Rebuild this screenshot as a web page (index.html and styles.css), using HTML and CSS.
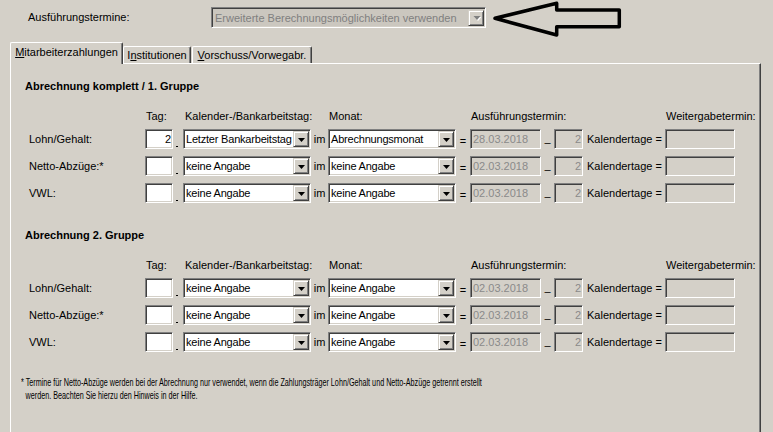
FILE: index.html
```html
<!DOCTYPE html>
<html lang="de">
<head>
<meta charset="utf-8">
<title>Ausführungstermine</title>
<link rel="stylesheet" href="styles.css">
</head>
<body>
<div class="dialog">
  <div class="topbar">
    <span class="top-label">Ausführungstermine:</span>
    <div class="combo combo-off combo-mode">
      <span class="combo-text">Erweiterte Berechnungsmöglichkeiten verwenden</span>
      <span class="combo-btn"><svg width="7" height="5" viewBox="0 0 7 5"><path class="arr-shadow" d="M1 1h7L4.5 5z"/><path class="arr" d="M0 0h7L3.5 4z"/></svg></span>
    </div>
    <svg class="pointer" width="135" height="40" viewBox="0 0 135 40">
      <polygon points="5,18.3 66.7,3.3 66.7,10 129.3,10 129.3,26.7 66.7,26.7 66.7,35" fill="none" stroke="#000" stroke-width="3.5" stroke-linejoin="round"/>
    </svg>
  </div>

  <div class="tabs">
    <span class="tab tab-active tab-w1"><u>M</u>itarbeiterzahlungen</span>
    <span class="tab tab-w2">I<u>n</u>stitutionen</span>
    <span class="tab tab-w3"><u>V</u>orschuss/Vorwegabr.</span>
  </div>

  <div class="panel">
    <section class="group">
      <h2 class="group-title">Abrechnung komplett / 1. Gruppe</h2>
      <div class="grid">
        <span class="hd hd-tag">Tag:</span>
        <span class="hd hd-kal">Kalender-/Bankarbeitstag:</span>
        <span class="hd hd-mon">Monat:</span>
        <span class="hd hd-date">Ausführungstermin:</span>
        <span class="hd hd-weiter">Weitergabetermin:</span>

        <span class="lbl">Lohn/Gehalt:</span>
        <span class="field num">2</span>
        <span class="dot"></span>
        <div class="combo"><span class="combo-text">Letzter Bankarbeitstag</span><span class="combo-btn"><svg width="7" height="4" viewBox="0 0 7 4"><path d="M0 0h7L3.5 4z"/></svg></span></div>
        <span class="sep">im</span>
        <div class="combo"><span class="combo-text">Abrechnungsmonat</span><span class="combo-btn"><svg width="7" height="4" viewBox="0 0 7 4"><path d="M0 0h7L3.5 4z"/></svg></span></div>
        <span class="sep eq">=</span>
        <span class="field field-off">28.03.2018</span>
        <span class="sep dash">–</span>
        <span class="field field-off num">2</span>
        <span class="kt">Kalendertage =</span>
        <span class="field field-off"></span>

        <span class="lbl">Netto-Abzüge:*</span>
        <span class="field num"></span>
        <span class="dot"></span>
        <div class="combo"><span class="combo-text">keine Angabe</span><span class="combo-btn"><svg width="7" height="4" viewBox="0 0 7 4"><path d="M0 0h7L3.5 4z"/></svg></span></div>
        <span class="sep">im</span>
        <div class="combo"><span class="combo-text">keine Angabe</span><span class="combo-btn"><svg width="7" height="4" viewBox="0 0 7 4"><path d="M0 0h7L3.5 4z"/></svg></span></div>
        <span class="sep eq">=</span>
        <span class="field field-off">02.03.2018</span>
        <span class="sep dash">–</span>
        <span class="field field-off num">2</span>
        <span class="kt">Kalendertage =</span>
        <span class="field field-off"></span>

        <span class="lbl">VWL:</span>
        <span class="field num"></span>
        <span class="dot"></span>
        <div class="combo"><span class="combo-text">keine Angabe</span><span class="combo-btn"><svg width="7" height="4" viewBox="0 0 7 4"><path d="M0 0h7L3.5 4z"/></svg></span></div>
        <span class="sep">im</span>
        <div class="combo"><span class="combo-text">keine Angabe</span><span class="combo-btn"><svg width="7" height="4" viewBox="0 0 7 4"><path d="M0 0h7L3.5 4z"/></svg></span></div>
        <span class="sep eq">=</span>
        <span class="field field-off">02.03.2018</span>
        <span class="sep dash">–</span>
        <span class="field field-off num">2</span>
        <span class="kt">Kalendertage =</span>
        <span class="field field-off"></span>
      </div>
    </section>

    <section class="group group-2">
      <h2 class="group-title">Abrechnung 2. Gruppe</h2>
      <div class="grid">
        <span class="hd hd-tag">Tag:</span>
        <span class="hd hd-kal">Kalender-/Bankarbeitstag:</span>
        <span class="hd hd-mon">Monat:</span>
        <span class="hd hd-date">Ausführungstermin:</span>
        <span class="hd hd-weiter">Weitergabetermin:</span>

        <span class="lbl">Lohn/Gehalt:</span>
        <span class="field num"></span>
        <span class="dot"></span>
        <div class="combo"><span class="combo-text">keine Angabe</span><span class="combo-btn"><svg width="7" height="4" viewBox="0 0 7 4"><path d="M0 0h7L3.5 4z"/></svg></span></div>
        <span class="sep">im</span>
        <div class="combo"><span class="combo-text">keine Angabe</span><span class="combo-btn"><svg width="7" height="4" viewBox="0 0 7 4"><path d="M0 0h7L3.5 4z"/></svg></span></div>
        <span class="sep eq">=</span>
        <span class="field field-off">02.03.2018</span>
        <span class="sep dash">–</span>
        <span class="field field-off num">2</span>
        <span class="kt">Kalendertage =</span>
        <span class="field field-off"></span>

        <span class="lbl">Netto-Abzüge:*</span>
        <span class="field num"></span>
        <span class="dot"></span>
        <div class="combo"><span class="combo-text">keine Angabe</span><span class="combo-btn"><svg width="7" height="4" viewBox="0 0 7 4"><path d="M0 0h7L3.5 4z"/></svg></span></div>
        <span class="sep">im</span>
        <div class="combo"><span class="combo-text">keine Angabe</span><span class="combo-btn"><svg width="7" height="4" viewBox="0 0 7 4"><path d="M0 0h7L3.5 4z"/></svg></span></div>
        <span class="sep eq">=</span>
        <span class="field field-off">02.03.2018</span>
        <span class="sep dash">–</span>
        <span class="field field-off num">2</span>
        <span class="kt">Kalendertage =</span>
        <span class="field field-off"></span>

        <span class="lbl">VWL:</span>
        <span class="field num"></span>
        <span class="dot"></span>
        <div class="combo"><span class="combo-text">keine Angabe</span><span class="combo-btn"><svg width="7" height="4" viewBox="0 0 7 4"><path d="M0 0h7L3.5 4z"/></svg></span></div>
        <span class="sep">im</span>
        <div class="combo"><span class="combo-text">keine Angabe</span><span class="combo-btn"><svg width="7" height="4" viewBox="0 0 7 4"><path d="M0 0h7L3.5 4z"/></svg></span></div>
        <span class="sep eq">=</span>
        <span class="field field-off">02.03.2018</span>
        <span class="sep dash">–</span>
        <span class="field field-off num">2</span>
        <span class="kt">Kalendertage =</span>
        <span class="field field-off"></span>
      </div>
    </section>

    <p class="note">* Termine für Netto-Abzüge werden bei der Abrechnung nur verwendet, wenn die Zahlungsträger Lohn/Gehalt und Netto-Abzüge getrennt erstellt<br>werden. Beachten Sie hierzu den Hinweis in der Hilfe.</p>
  </div>
</div>
</body>
</html>
```

FILE: styles.css
```css
html, body {
  margin: 0;
  padding: 0;
  background: #d4d0c8;
  overflow: hidden;
}

body {
  font-family: "Liberation Sans", Arial, sans-serif;
  font-size: 11px;
  line-height: 13px;
  color: #000;
}

.dialog {
  width: 773px;
  height: 432px;
  overflow: hidden;
}

/* top row: mode selector */
.topbar {
  display: flex;
  align-items: flex-start;
  height: 42px;
  padding-left: 28px;
}

.top-label {
  width: 183px;
  margin-top: 11px;
  white-space: nowrap;
}

.pointer {
  margin-left: 4px;
  display: block;
}

/* classic sunken combo box */
.combo {
  box-sizing: border-box;
  height: 20px;
  display: flex;
  align-items: center;
  padding: 1px;
  background: #fff;
  border: 1px solid;
  border-color: #808080 #fff #fff #808080;
  box-shadow: inset 1px 1px #404040, inset -1px -1px #d4d0c8;
}

.combo-text {
  flex: 1;
  min-width: 0;
  overflow: hidden;
  white-space: nowrap;
  padding-left: 1px;
  line-height: 16px;
  letter-spacing: -0.2px;
}

.combo-btn {
  flex: none;
  box-sizing: border-box;
  width: 16px;
  height: 16px;
  display: flex;
  align-items: center;
  justify-content: center;
  padding-left: 1px;
  padding-top: 1px;
  background: #d4d0c8;
  border: 1px solid;
  border-color: #d4d0c8 #404040 #404040 #d4d0c8;
  box-shadow: inset 1px 1px #fff, inset -1px -1px #808080;
}

.combo-btn svg {
  display: block;
  fill: #000;
}

.combo-mode {
  width: 275px;
  height: 21px;
  margin-top: 7px;
}

.combo-off {
  background: #cbc7bf;
  color: #808080;
}

.combo-off .combo-text {
  padding-left: 2px;
  letter-spacing: 0;
}

.combo-off .combo-btn svg {
  width: 8px;
  height: 5px;
}

.combo-off .arr {
  fill: #808080;
}

.combo-off .arr-shadow {
  fill: #fff;
}

/* tab strip */
.tabs {
  display: flex;
  align-items: flex-end;
  height: 21px;
  padding-left: 10px;
  position: relative;
  z-index: 1;
}

.tab {
  box-sizing: border-box;
  height: 17px;
  padding-top: 2px;
  text-align: center;
  white-space: nowrap;
  border-top: 1px solid #fff;
  border-left: 1px solid #fff;
  border-right: 1px solid #404040;
  border-radius: 2px 2px 0 0;
  box-shadow: inset -1px 0 #808080;
}

.tab u {
  text-decoration: underline;
  text-underline-offset: 1px;
}

.tab-active {
  height: 22px;
  margin-bottom: -1px;
  padding-top: 3px;
  background: #d4d0c8;
}

.tab-w1 { width: 113px; }
.tab-w2 { width: 68px; }
.tab-w3 { width: 120px; margin-left: 1px; }

/* page panel, runs on below the window edge */
.panel {
  box-sizing: border-box;
  width: 751px;
  height: 369px;
  margin-left: 10px;
  padding: 16px 0 0 14px;
  border-top: 1px solid #fff;
  border-left: 1px solid #fff;
  border-right: 1px solid #404040;
  box-shadow: inset -1px 0 #808080;
}

.group-title {
  margin: 0 0 17px;
  font-size: 11px;
  font-weight: bold;
  line-height: 13px;
}

.group-2 {
  margin-top: 26px;
}

.grid {
  display: grid;
  grid-template-columns: 120px 28px 10px 128px 17px 128px 14px 71px 13px 29px 82px 70px;
  grid-template-rows: 12px 20px 20px 20px;
  row-gap: 7px;
  align-items: center;
}

.hd {
  align-self: start;
  white-space: nowrap;
  padding-left: 1px;
}

.hd-tag { grid-column: 2 / 4; }
.hd-kal { grid-column: 4 / 6; padding-left: 2px; }
.hd-mon { grid-column: 6 / 8; }
.hd-date { grid-column: 8 / 11; }
.hd-weiter { grid-column: 12 / 13; overflow: visible; }

.lbl {
  padding-left: 4px;
  white-space: nowrap;
}

/* classic sunken edit field */
.field {
  box-sizing: border-box;
  height: 20px;
  padding: 1px 3px;
  line-height: 16px;
  background: #fff;
  border: 1px solid;
  border-color: #808080 #fff #fff #808080;
  box-shadow: inset 1px 1px #404040, inset -1px -1px #d4d0c8;
  white-space: nowrap;
  overflow: hidden;
}

.field.num {
  text-align: right;
  padding-right: 1px;
}

.field-off {
  background: #d4d0c8;
  color: #8a8a8a;
  padding-left: 2px;
}

.dot {
  align-self: end;
  justify-self: start;
  width: 2px;
  height: 1px;
  margin-left: 3px;
  margin-bottom: 2px;
  background: #000;
}

.sep {
  text-align: center;
}

.eq {
  padding-top: 4px;
}

.dash {
  padding-top: 7px;
}

.kt {
  padding-left: 4px;
  white-space: nowrap;
}

.note {
  margin: 24px 0 0 -4px;
  width: 760px;
  line-height: 13px;
  white-space: nowrap;
  padding-left: 7px;
  text-indent: -7px;
  transform: scaleX(0.655);
  transform-origin: 0 0;
}
```
